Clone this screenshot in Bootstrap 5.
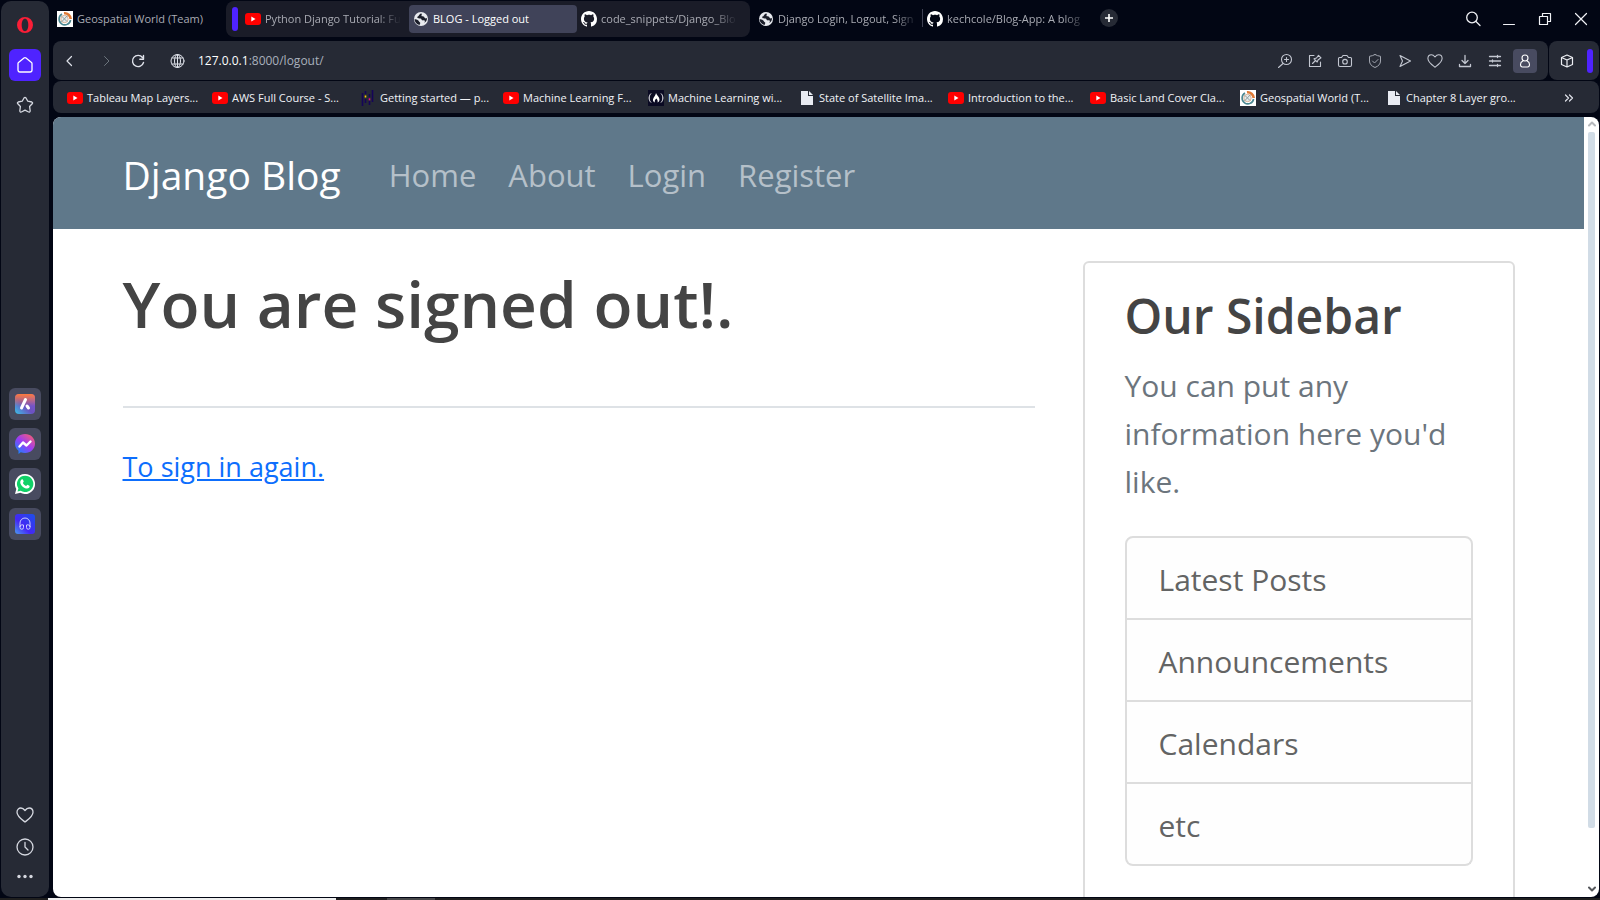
<!DOCTYPE html>
<html lang="en">
<head>
<meta charset="utf-8">
<meta name="viewport" content="width=device-width, initial-scale=1">
<title>BLOG - Logged out</title>
<link href="https://cdn.jsdelivr.net/npm/bootstrap@5.3.0/dist/css/bootstrap.min.css" rel="stylesheet">
<style>
  body { background: #020614; font-family: "Open Sans", "Noto Sans", sans-serif; }
  svg { display: block; flex: none; }
  button { border: 0; padding: 0; background: none; color: inherit; }
  .ic { fill: none; stroke: currentColor; stroke-linecap: round; stroke-linejoin: round; }
  .shell { padding: 1px; gap: 4px; min-height: 0; }

  /* left browser sidebar */
  .rail { width: 48px; background: #262a35; border-radius: 10px; color: #d5d8e0; padding: 8px 0 2px; }
  .rail button { width: 32px; height: 32px; border-radius: 6px; display: grid; place-items: center; }
  .rail .rail-home { background: #4f23ff; color: #fff; }
  .rail .rail-app { background: #484b60; }

  /* tab strip */
  .chrome { font-size: 11px; line-height: 16px; color: #dfe2ea; }
  .tabstrip { height: 40px; }
  .tabitem { width: 168px; height: 28px; padding: 0 4px; gap: 4px; border-radius: 4px; color: #a9abb3; text-decoration: none; margin-top: 4px; }
  .tabitem span, .bm span { flex: 1; min-width: 0; white-space: nowrap; }
  .tabitem.clip span { -webkit-mask-image: linear-gradient(to left, transparent, #000 24px); mask-image: linear-gradient(to left, transparent, #000 24px); }
  .tabitem.current { background: #404359; color: #fff; }
  .tabgroup { height: 36px; width: 524px; background: #1a1c28; border-radius: 8px; margin: 0 4px 0 5px; padding-left: 6px; }
  .tabgroup .tabitem { margin-top: 0; }
  .tabgroup .tabitem.clip { padding-right: 8px; }
  .tabgroup .accent { margin-right: 3px; }
  .accent { width: 6px; height: 24px; border-radius: 3px; background: #4f23ff; }
  .divider { width: 1px; height: 18px; background: #3d4052; }
  .plus { width: 18px; height: 18px; border-radius: 50%; background: #262a35; display: grid; place-items: center; margin-left: 9px; color: #fff; }
  .winbtns { height: 28px; gap: 20px; padding-right: 10px; margin-top: 4px; color: #f1f2f6; }
  .winbtns button { width: 16px; height: 16px; }

  /* address bar and bookmarks */
  .bar { background: #262a35; border-radius: 8px; }
  .addr { height: 39px; padding: 0 11px 0 9px; }
  .addr .tools { gap: 14px; color: #c3c7d1; }
  .addr .url { color: #a9b0bc; font-size: 12px; white-space: nowrap; }
  .addr .url b { font-weight: 400; color: #fff; }
  .profile { width: 24px; height: 24px; border-radius: 4px; background: #484b60; display: grid; place-items: center; color: #fff; margin-left: -4px; }
  .ext { width: 50px; padding: 0 6px 0 10px; color: #eceef3; }
  .bms { height: 32px; padding: 2px 22px 0 14px; margin: 1px 0 4px; display: grid; align-items: center;
         grid-template-columns: 145px 148px 143px 145px 151px 149px 142px 150px 146px 1fr auto; }
  .bm { display: flex; align-items: center; gap: 4px; color: #f1f3f7; text-decoration: none; }

  /* web page */
  .view { background: #fff; border-radius: 8px; overflow: hidden; min-height: 0; }
  .doc { min-width: 0; overflow: hidden; font-size: 30px; line-height: 48px; color: #333; }
  .doc .container-fluid { max-width: 1440px; --bs-gutter-x: 48px; }
  .doc .row { --bs-gutter-x: 48px; }
  .doc .steel { background: #5f788a; height: 112px; padding: 4px 0 0; }
  .steel .navbar-brand { font-size: 39px; line-height: 60px; color: #fff; margin-right: 32px; padding: 0; }
  .steel .navbar-nav .nav-link { font-size: 31px; line-height: 48px; padding: 0 16px; color: #b5c0c9; }
  .doc h1, .doc h3 { color: #444; font-weight: 600; margin: 0 0 16px; }
  .doc h1 { font-size: 64px; line-height: 80px; padding-top: 3px; }
  .doc h3 { font-size: 48px; line-height: 61px; }
  .doc hr { border-top: 2px solid #dee2e6; opacity: 1; margin: 62px 0 33px; }
  .again { font-size: 27px; line-height: 52px; }
  .again a { color: #0d6efd; }
  .panel { border: 2px solid #ddd; border-radius: 6px; padding: 22px 40px 20px; background: #fff; }
  .panel p { color: #6c757d; margin-bottom: 30px; }
  .panel .list-group { --bs-list-group-border-width: 2px; --bs-list-group-border-color: #ddd; --bs-list-group-border-radius: 8px; margin-bottom: 32px; }
  .panel .list-group-item { padding: 18px 32px 14px; background: #fefefe; color: #636464; }
  .scroll { width: 15px; padding: 3px 0 4px; }
  .scroll .thumb { width: 7px; border-radius: 2px; background: #d1dce6; flex: 0 0 90%; }
  .taskbar { height: 2px; background: #1f1f1f; }
  .taskbar i { width: 288px; background: #eee; margin-left: 48px; }
  .taskbar i + i { width: 48px; background: #48484a; margin-left: 51px; }
</style>
</head>
<body class="vh-100 d-flex flex-column overflow-hidden">
<svg width="0" height="0" class="position-absolute" aria-hidden="true">
  <symbol id="yt" viewBox="0 0 16 16"><rect y="2" width="16" height="12" rx="3" fill="#f00"/><path d="M6.300 5.500v5L10.500 8z" fill="#fff"/></symbol>
  <symbol id="earth" viewBox="0 0 16 16"><circle cx="8" cy="8" r="7" fill="#e8eaef"/><path d="M8.500 2.500c-2 .2-2.200 1.700-3 2.500s-1.500.5-1.200 1.500 2 .8 3.200 1 .8 1.500 1.800 1.800 1.500-.3 2.200.2.500 1.500-.5 2.500c2-1 3.200-2.800 3-5-.7.500-1.500.6-2.200 0s-.3-1.300-1.300-1.500-1.700.1-2-.7.900-1.300 0-2.300zM1.500 8.300c1.500 0 2.500.2 3.500 1s.8 1.500 1.800 2 .2 1.700-.3 2.700C3.700 13.300 1.700 11.200 1.500 8.300z" fill="#1b1e2a"/></symbol>
  <symbol id="gh" viewBox="0 0 16 16"><path fill="#fff" d="M8 0C3.580 0 0 3.580 0 8c0 3.540 2.290 6.530 5.470 7.590.4.070.55-.17.55-.38 0-.19-.01-.82-.01-1.490-2.010.37-2.530-.49-2.690-.94-.09-.23-.48-.94-.82-1.130-.28-.15-.68-.52-.01-.53.63-.01 1.080.58 1.230.82.72 1.210 1.870.87 2.330.66.070-.52.280-.87.510-1.070-1.780-.2-3.640-.89-3.640-3.950 0-.87.310-1.590.82-2.150-.08-.2-.36-1.020.08-2.120 0 0 .67-.21 2.200.82.640-.18 1.320-.27 2-.27s1.360.09 2 .27c1.530-1.040 2.200-.82 2.200-.82.440 1.100.160 1.920.080 2.120.510.560.82 1.270.82 2.150 0 3.070-1.870 3.750-3.650 3.950.290.250.540.730.540 1.480 0 1.070-.01 1.930-.01 2.200 0 .21.150.46.550.38A8.010 8.010 0 0 0 16 8c0-4.420-3.580-8-8-8z"/></symbol>
  <symbol id="geo" viewBox="0 0 16 16"><path fill="#fff" d="M0 0h16v16H0z"/><path d="M7 2.300A6 6 0 0 1 13.700 8" fill="none" stroke="#e07a35" stroke-width="2.600"/><path d="M13.600 9A5.800 5.800 0 1 1 5 3" fill="none" stroke="#4a8791" stroke-width="1.600"/><circle cx="7.500" cy="8" r="3.700" fill="#e6ecec" stroke="#d3a27f" stroke-width=".8"/><path d="M4.500 11l6-6.500M5 5.500l5 5" stroke="#8e9da0" stroke-width="1"/></symbol>
  <symbol id="page" viewBox="0 0 16 16"><path d="M2 1h7v5h5v9H2z" fill="#e8ebf2"/><path d="M10 1l4 4h-4z" fill="#e8ebf2"/></symbol>
  <symbol id="pandas" viewBox="0 0 16 16"><path d="M2.500 3v13M5.500 1v3M5.500 9v4M9.500 4v3M9.500 11v4M12.500 0v12" stroke="#150458" stroke-width="1.600"/><path d="M4.700 5.500h1.600v2H4.700z" fill="#ffca00"/><path d="M8.700 8.300h1.600v2H8.700z" fill="#e70488"/></symbol>
  <symbol id="fcc" viewBox="0 0 16 16"><path fill="#0a0a23" d="M0 0h16v16H0z"/><path d="M3 3.500C.5 6 .5 10 3 12.500M13 3.500c2.500 2.500 2.500 6.500 0 9" fill="none" stroke="#fff"/><path d="M8 3c.8 2.500 3.500 4 3.500 6.500 0 1.500-.8 2.500-2 3 .6-1.500 0-2.500-1-4-1.300 1-2.300 2.500-1.500 4C4.800 11.800 4.500 10 5.500 8S7.800 5 8 3z" fill="#fff"/></symbol>
  <symbol id="heart" viewBox="0 0 18 18"><path d="M9 16C6.500 14 1 10.500 1 6.200 1 3.500 2.800 2 4.900 2 6.800 2 8 3.200 9 4.500 10 3.200 11.200 2 13.100 2 15.200 2 17 3.500 17 6.200 17 10.500 11.500 14 9 16z"/></symbol>
</svg>

<div class="shell d-flex flex-grow-1">
  <aside class="rail d-flex flex-column align-items-center flex-shrink-0">
    <button aria-label="Opera"><svg width="16" height="16" viewBox="0 0 16 16"><path fill-rule="evenodd" fill="#fa1e37" d="M8 0a8 8 0 1 0 0 16A8 8 0 0 0 8 0zm0 1.800c2 0 3.300 2.700 3.300 6.200S10 14.200 8 14.200 4.700 11.500 4.700 8 6 1.800 8 1.800z"/></svg></button>
    <button class="rail-home mt-2" aria-label="Home"><svg class="ic" width="18" height="18" viewBox="0 0 18 18" stroke-width="1.300"><path d="M2 7.500Q2 7 2.500 6.500L8 2q1-.8 2 0l5.500 4.500q.5.500.5 1V14q0 2-2 2H4q-2 0-2-2z"/></svg></button>
    <button class="mt-2" aria-label="Bookmarks"><svg class="ic" width="18" height="18" viewBox="0 0 18 18" stroke-width="1.300"><path d="M8 2q1-1.200 2 0l1.800 3.200 4 .8q1.200.5.600 1.500l-2.800 3 .6 4.500q-.2 1.400-1.600 1L9 14.200 5.400 16q-1.400.4-1.600-1l.6-4.500-2.800-3Q1 6.500 2.200 6l4-.8z"/></svg></button>
    <div class="flex-grow-1 d-flex flex-column justify-content-center gap-2 pt-2">
      <button class="rail-app" aria-label="Aria"><svg width="20" height="20" viewBox="0 0 20 20"><defs><linearGradient id="g1" x1="0" y1="1" x2="1" y2="0"><stop stop-color="#39c2e8"/><stop offset=".45" stop-color="#6b52c0"/><stop offset="1" stop-color="#8457d8"/></linearGradient><linearGradient id="g1b" x1=".5" y1="0" x2=".5" y2=".6"><stop stop-color="#ff7a3c"/><stop offset="1" stop-color="#ff7a3c" stop-opacity="0"/></linearGradient></defs><rect width="20" height="20" rx="4" fill="url(#g1)"/><rect width="20" height="20" rx="4" fill="url(#g1b)"/><path d="M10.500 5.500L6.500 14M12 12l1.500 2" stroke="#fff" stroke-width="3" stroke-linecap="round"/></svg></button>
      <button class="rail-app" aria-label="Messenger"><svg width="20" height="20" viewBox="0 0 20 20"><defs><linearGradient id="g2" x1=".1" y1="1" x2=".9" y2="0"><stop stop-color="#0a8cff"/><stop offset=".5" stop-color="#9a3bf5"/><stop offset="1" stop-color="#ff6068"/></linearGradient></defs><path fill="url(#g2)" d="M10 0c5.700 0 10 4.200 10 9.500S15.700 19 10 19c-1.500 0-3-.3-4.300-.8L3.500 20v-3.300A9.500 9.500 0 0 1 0 9.500C0 4.200 4.300 0 10 0z"/><path d="M4.500 12.500L8 8.500l3.500 3 4-4" fill="none" stroke="#fff" stroke-width="2.400" stroke-linejoin="round" stroke-linecap="round"/></svg></button>
      <button class="rail-app" aria-label="WhatsApp"><svg width="20" height="20" viewBox="0 0 20 20"><path fill="#fff" d="M10 0a10 10 0 1 1-4.700 18.800L0 20l1.300-5A10 10 0 0 1 10 0z"/><path fill="#10d167" d="M10.200 1.700a8.200 8.200 0 1 1-4.500 15.100l-3.200.8.900-3.100A8.200 8.200 0 0 1 10.200 1.700z"/><path fill="#fff" d="M7 5.300c.5-.2.800 0 1 .5l.7 1.700c.1.500-.7 1-.8 1.400.6 1.400 1.800 2.400 3.200 3 .5-.1 1-1.200 1.400-1.100l1.900.9c.5.3.2 1.600-.3 2.100-1 1-2.700 1-4.500.1C7.300 12.800 5.600 10.700 5.300 9c-.3-1.600.6-3.300 1.700-3.700z"/></svg></button>
      <button class="rail-app" aria-label="Player"><svg width="20" height="20" viewBox="0 0 20 20"><defs><linearGradient id="g3" x1="0" y1="1" x2="1" y2="0"><stop stop-color="#4a9af0"/><stop offset=".4" stop-color="#4527f5"/><stop offset="1" stop-color="#1c50e8"/></linearGradient></defs><rect width="20" height="20" rx="3" fill="url(#g3)"/><path d="M5 13V9a5 5 0 0 1 10 0v4M8.500 11v2.500a1.700 1.700 0 0 1-3.500 0V12q2-2 3.500-1zM11.500 11v2.500a1.700 1.700 0 0 0 3.500 0V12q-2-2-3.500-1z" fill="none" stroke="#d9dcff" stroke-width=".9"/></svg></button>
    </div>
    <button aria-label="Pinboards"><svg class="ic" width="18" height="18" stroke-width="1.300"><use href="#heart"/></svg></button>
    <button aria-label="History"><svg class="ic" width="18" height="18" viewBox="0 0 18 18" stroke-width="1.300"><circle cx="9" cy="9" r="8"/><path d="M9 4.500V9l3 3"/></svg></button>
    <button aria-label="Sidebar setup"><svg width="18" height="18" viewBox="0 0 18 18" fill="currentColor"><circle cx="3" cy="6.500" r="1.700"/><circle cx="9" cy="6.500" r="1.700"/><circle cx="15" cy="6.500" r="1.700"/></svg></button>
  </aside>

  <div class="d-flex flex-column flex-grow-1 overflow-hidden">
    <header class="chrome">
      <div class="tabstrip d-flex align-items-start">
        <a href="#" class="tabitem d-flex align-items-center"><svg width="16" height="16"><use href="#geo"/></svg><span>Geospatial World (Team)</span></a>
        <div class="tabgroup d-flex align-items-center">
          <div class="accent"></div>
          <a href="#" class="tabitem clip d-flex align-items-center"><svg width="16" height="16"><use href="#yt"/></svg><span>Python Django Tutorial: Fu</span></a>
          <a href="#" class="tabitem current d-flex align-items-center"><svg width="16" height="16"><use href="#earth"/></svg><span>BLOG - Logged out</span></a>
          <a href="#" class="tabitem clip d-flex align-items-center"><svg width="16" height="16"><use href="#gh"/></svg><span>code_snippets/Django_Blo</span></a>
        </div>
        <a href="#" class="tabitem clip d-flex align-items-center"><svg width="16" height="16"><use href="#earth"/></svg><span>Django Login, Logout, Sign</span></a>
        <div class="divider mt-2"></div>
        <a href="#" class="tabitem clip d-flex align-items-center"><svg width="16" height="16"><use href="#gh"/></svg><span>kechcole/Blog-App: A blog</span></a>
        <button class="plus mt-2" aria-label="New tab"><svg width="8" height="8" viewBox="0 0 8 8"><path d="M4 0v8M0 4h8" stroke="currentColor" stroke-width="1.600"/></svg></button>
        <div class="winbtns d-flex align-items-center ms-auto">
          <button aria-label="Search tabs"><svg class="ic" width="16" height="16" viewBox="0 0 16 16" stroke-width="1.300"><circle cx="7" cy="6.500" r="5.300"/><path d="M11 10.500l4 4"/></svg></button>
          <button aria-label="Minimize"><svg class="ic" width="16" height="16" viewBox="0 0 16 16"><path d="M2.500 13.500h11"/></svg></button>
          <button aria-label="Restore"><svg class="ic" width="16" height="16" viewBox="0 0 16 16" stroke-width="1.200"><path d="M2.500 5.500h8v8h-8zM5.500 5V2.500h8v8h-3"/></svg></button>
          <button aria-label="Close"><svg class="ic" width="16" height="16" viewBox="0 0 16 16" stroke-width="1.200"><path d="M2.500 2.500l11 11M13.500 2.500l-11 11"/></svg></button>
        </div>
      </div>
      <div class="d-flex" style="gap:1px">
        <div class="bar addr d-flex align-items-center flex-grow-1">
          <button aria-label="Back"><svg class="ic" width="16" height="16" viewBox="0 0 16 16" stroke-width="1.200"><path d="M9.500 3.500L5 8l4.500 4.500"/></svg></button>
          <button class="ms-3 text-secondary" aria-label="Forward"><svg class="ic ms-1" width="16" height="16" viewBox="0 0 16 16"><path d="M6.500 3.500L11 8l-4.500 4.500"/></svg></button>
          <button class="ms-3" aria-label="Reload"><svg class="ic" width="16" height="16" viewBox="0 0 16 16" stroke-width="1.400"><path d="M12.500 4.500A5.600 5.600 0 1 0 13.500 9.500M13.500 2.500v3.700H9.800"/></svg></button>
          <svg class="ic ms-4" width="16" height="16" viewBox="0 0 16 16" stroke-width="1"><circle cx="7.500" cy="8" r="6.500"/><ellipse cx="7.500" cy="8" rx="3" ry="6.500"/><path d="M7.500 1.500v13M2 5h11M2 11h11"/></svg>
          <div class="url ms-2 ps-1 flex-grow-1"><b>127.0.0.1</b>:8000/logout/</div>
          <div class="tools d-flex align-items-center">
            <button aria-label="Zoom"><svg class="ic" width="16" height="16" viewBox="0 0 16 16" stroke-width="1.100"><circle cx="9.500" cy="6.500" r="5"/><path d="M6 10.500l-4.500 4M9.500 4.500v4M7.500 6.500h4"/></svg></button>
            <button aria-label="Edit"><svg class="ic" width="16" height="16" viewBox="0 0 16 16" stroke-width="1.100"><path d="M7 2.500H2.500v11h11V9M5.500 10.500l2.500-2.500M7 5.800L10.200 9l.8-2 3-2.200-2.500-2.500L9.500 5z"/></svg></button>
            <button aria-label="Snapshot"><svg class="ic" width="16" height="16" viewBox="0 0 16 16" stroke-width="1.100"><path d="M1.500 5.500q0-1 1-1H4.500L6 2.500h4l1.500 2h2q1 0 1 1V12q0 1.500-1.500 1.500H3Q1.500 13.500 1.500 12z"/><circle cx="8" cy="8.700" r="2.300"/></svg></button>
            <button aria-label="Ad blocker"><svg class="ic" width="16" height="16" viewBox="0 0 16 16" stroke-width="1" opacity=".8"><path d="M8 1.500q2.500 1.500 5.500 1.800V8q0 4.300-5.500 6.500Q2.500 12.300 2.500 8V3.300Q5.500 3 8 1.500zM5.500 8l2 2 3.500-3.500"/></svg></button>
            <button aria-label="Send to My Flow"><svg class="ic" width="16" height="16" viewBox="0 0 16 16" stroke-width="1.100"><path d="M3 2.500L13.500 8 3 13.500 5.500 8z"/></svg></button>
            <button aria-label="Bookmark page"><svg class="ic" width="16" height="16" stroke-width="1.200"><use href="#heart"/></svg></button>
            <button aria-label="Downloads"><svg class="ic" width="16" height="16" viewBox="0 0 16 16" stroke-width="1.300"><path d="M8 2.500v8M5 7.500l3 3 3-3M2.500 11.500v2h11v-2"/></svg></button>
            <button aria-label="Easy setup"><svg class="ic" width="16" height="16" viewBox="0 0 16 16" stroke-width="1.300"><path d="M2.500 3.500h11M2.500 8h11M2.500 12.500h11M10.500 2.500v2M5.500 7v2M10.500 11.500v2"/></svg></button>
            <button class="profile" aria-label="Profile"><svg class="ic" width="16" height="16" viewBox="0 0 16 16" stroke-width="1.100"><circle cx="8" cy="5" r="3"/><path d="M5.800 8Q3.500 9 3.500 11.500T5.500 14h5q2 0 2-2.500T10.200 8"/></svg></button>
          </div>
        </div>
        <div class="bar ext d-flex align-items-center justify-content-between">
          <button aria-label="Extensions"><svg class="ic" width="16" height="16" viewBox="0 0 16 16" stroke-width="1.200"><path d="M8 2l5.500 2.500v7L8 14l-5.500-2.500v-7zM2.500 4.500L8 7l5.500-2.500M8 7v7"/></svg></button>
          <div class="accent"></div>
        </div>
      </div>
      <nav class="bar bms" aria-label="Bookmarks bar">
        <a class="bm" href="#"><svg width="16" height="16"><use href="#yt"/></svg><span>Tableau Map Layers...</span></a>
        <a class="bm" href="#"><svg width="16" height="16"><use href="#yt"/></svg><span>AWS Full Course - S...</span></a>
        <a class="bm" href="#"><svg width="16" height="16"><use href="#pandas"/></svg><span>Getting started — p...</span></a>
        <a class="bm" href="#"><svg width="16" height="16"><use href="#yt"/></svg><span>Machine Learning F...</span></a>
        <a class="bm" href="#"><svg width="16" height="16"><use href="#fcc"/></svg><span>Machine Learning wi...</span></a>
        <a class="bm" href="#"><svg width="16" height="16"><use href="#page"/></svg><span>State of Satellite Ima...</span></a>
        <a class="bm" href="#"><svg width="16" height="16"><use href="#yt"/></svg><span>Introduction to the...</span></a>
        <a class="bm" href="#"><svg width="16" height="16"><use href="#yt"/></svg><span>Basic Land Cover Cla...</span></a>
        <a class="bm" href="#"><svg width="16" height="16"><use href="#geo"/></svg><span>Geospatial World (T...</span></a>
        <a class="bm" href="#"><svg width="16" height="16"><use href="#page"/></svg><span>Chapter 8 Layer gro...</span></a>
        <button aria-label="More bookmarks"><svg class="ic" width="16" height="16" viewBox="0 0 16 16" stroke-width="1.200"><path d="M4.500 5l3 3-3 3M8.500 5l3 3-3 3"/></svg></button>
      </nav>
    </header>

    <div class="view d-flex flex-grow-1">
      <div class="doc flex-grow-1">
        <nav class="navbar navbar-expand steel mb-4">
          <div class="container-fluid">
            <a class="navbar-brand" href="#">Django Blog</a>
            <div class="navbar-nav me-auto">
              <a class="nav-link" href="#">Home</a>
              <a class="nav-link" href="#">About</a>
              <a class="nav-link" href="#">Login</a>
              <a class="nav-link" href="#">Register</a>
            </div>
          </div>
        </nav>
        <main class="container-fluid pt-2">
          <div class="row">
            <div class="col-8">
              <h1>You are signed out!.</h1>
              <hr>
              <div class="again"><a href="#">To sign in again.</a></div>
            </div>
            <div class="col-4">
              <div class="panel">
                <h3>Our Sidebar</h3>
                <p>You can put any information here you'd like.</p>
                <ul class="list-group">
                  <li class="list-group-item">Latest Posts</li>
                  <li class="list-group-item">Announcements</li>
                  <li class="list-group-item">Calendars</li>
                  <li class="list-group-item">etc</li>
                </ul>
              </div>
            </div>
          </div>
        </main>
      </div>
      <div class="scroll d-flex flex-column align-items-center justify-content-between flex-shrink-0">
        <svg class="ic" width="8" height="8" viewBox="0 0 8 8" style="color:#b5b8bc" stroke-width="2"><path d="M1 5.500l3-3 3 3"/></svg>
        <div class="thumb mb-auto mt-1"></div>
        <svg class="ic" width="8" height="8" viewBox="0 0 8 8" style="color:#55585c" stroke-width="2"><path d="M1 2.500l3 3 3-3"/></svg>
      </div>
    </div>
  </div>
</div>
<div class="taskbar d-flex flex-shrink-0"><i></i><i></i></div>
<script src="https://cdn.jsdelivr.net/npm/bootstrap@5.3.0/dist/js/bootstrap.bundle.min.js"></script>
</body>
</html>
